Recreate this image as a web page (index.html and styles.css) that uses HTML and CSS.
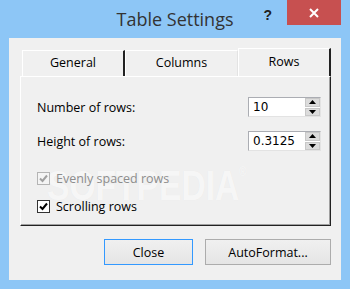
FILE: index.html
```html
<!DOCTYPE html>
<html lang="en">
<head>
  <meta charset="UTF-8">
  <title>Table Settings</title>
  <link rel="stylesheet" href="styles.css">
</head>
<body>
  <div class="window">
    <div class="titlebar">
      <span></span>
      <h1 class="title">Table Settings</h1>
      <div class="controls">
        <span class="help">?</span>
        <span class="close">
          <svg width="10" height="10" viewBox="0 0 10 10"><path d="M1 1L9 9M9 1L1 9" stroke="#fff" stroke-width="2"/></svg>
        </span>
      </div>
    </div>

    <div class="client">
      <div class="tabs">
        <div class="tab tab-first">General</div>
        <div class="tab tab-mid">Columns</div>
        <div class="tab active">Rows</div>
      </div>

      <div class="panel">
        <div class="watermark">SOFTPEDIA<sup>®</sup></div>

        <div class="field">
          <span>Number of rows:</span>
          <div class="spin">
            <span class="spin-value">10</span>
            <span class="spin-btns">
              <span class="spin-btn"><svg width="7" height="4" viewBox="0 0 7 4"><path d="M3.5 0L7 4H0Z" fill="#000"/></svg></span>
              <span class="spin-btn"><svg width="7" height="4" viewBox="0 0 7 4"><path d="M0 0H7L3.5 4Z" fill="#000"/></svg></span>
            </span>
          </div>
        </div>
        <div class="field">
          <span>Height of rows:</span>
          <div class="spin">
            <span class="spin-value">0.3125</span>
            <span class="spin-btns">
              <span class="spin-btn"><svg width="7" height="4" viewBox="0 0 7 4"><path d="M3.5 0L7 4H0Z" fill="#000"/></svg></span>
              <span class="spin-btn"><svg width="7" height="4" viewBox="0 0 7 4"><path d="M0 0H7L3.5 4Z" fill="#000"/></svg></span>
            </span>
          </div>
        </div>

        <div class="check disabled">
          <span class="box"><svg width="11" height="11" viewBox="0 0 11 11"><path d="M2 5.5L4.5 8L9 2.5" fill="none" stroke="#a0a0a0" stroke-width="2"/></svg></span>
          <span>Evenly spaced rows</span>
        </div>
        <div class="check">
          <span class="box"><svg width="11" height="11" viewBox="0 0 11 11"><path d="M2 5.5L4.5 8L9 2.5" fill="none" stroke="#000" stroke-width="2"/></svg></span>
          <span>Scrolling rows</span>
        </div>
      </div>

      <div class="actions">
        <button class="btn btn-default">Close</button>
        <button class="btn btn-wide">AutoFormat...</button>
      </div>
    </div>
  </div>
</body>
</html>
```

FILE: styles.css
```css
body { margin: 0; background: #8dc6f6; font-family: "Open Sans", "Noto Sans", sans-serif; }

.window { width: 350px; height: 289px; background: #8dc6f6; }

.titlebar {
  height: 38px;
  padding: 0 9px;
  display: grid;
  grid-template-columns: 1fr auto 1fr;
}
.title {
  margin: 0;
  font-weight: normal;
  font-size: 18px;
  color: #333;
  line-height: 39px;
}
.controls { display: flex; justify-content: flex-end; align-items: flex-start; }
.help {
  font-family: "Liberation Sans", sans-serif;
  font-weight: bold;
  font-size: 14px;
  color: #222;
  margin: 7px 15px 0 0;
}
.close {
  width: 54px;
  height: 25px;
  background: #c75050;
  display: flex;
  align-items: center;
  justify-content: center;
}

.client {
  height: 242px;
  box-sizing: border-box;
  background: #f0f0f0;
  margin: 0 9px;
  padding: 10px 10px 15px 11px;
  font-size: 12.5px;
  color: #000;
}

/* tabs */
.tabs { height: 28px; display: flex; align-items: flex-end; }
.tab {
  height: 26px;
  box-sizing: border-box;
  border-top: 1px solid #fff;
  border-left: 1px solid #fff;
  border-right: 1px solid #e3e3e3;
  display: flex;
  align-items: center;
  justify-content: center;
  padding-bottom: 2px;
}
.tab-first { margin-left: 2px; width: 103px; border-right: 2px solid #222; }
.tab-mid { width: 113px; }
.tab.active {
  width: 93px;
  height: 29px;
  margin-bottom: -1px;
  border-right: 2px solid #222;
  background: #f0f0f0;
  position: relative;
  padding-bottom: 4px;
}

.panel {
  height: 150px;
  box-sizing: border-box;
  border-top: 1px solid #fff;
  border-left: 1px solid #fff;
  border-right: 1px solid #222;
  border-bottom: 1px solid #222;
  box-shadow: inset -1px -1px #a0a0a0;
  padding: 20px 9px 0 16px;
  position: relative;
}

.field {
  height: 20px;
  display: flex;
  align-items: center;
  justify-content: space-between;
  margin-bottom: 14px;
  position: relative;
}
.spin {
  width: 73px;
  height: 20px;
  box-sizing: border-box;
  border: 1px solid #abadb3;
  border-right-color: #e3e3e3;
  border-bottom-color: #e3e3e3;
  background: #fff;
  display: flex;
}
.spin-value {
  flex: 1;
  padding-left: 4px;
  font-family: "DejaVu Sans", sans-serif;
  font-size: 12px;
  line-height: 18px;
}
.spin-btns { width: 15px; display: flex; flex-direction: column; gap: 1px; }
.spin-btn {
  flex: 1;
  background: #dcdcdc;
  border: 1px solid #c8c8c8;
  display: flex;
  align-items: center;
  justify-content: center;
}

.check { height: 20px; display: flex; align-items: center; gap: 6px; margin-top: 17px; position: relative; }
.check + .check { margin-top: 8px; }
.box {
  width: 13px;
  height: 13px;
  box-sizing: border-box;
  border: 1px solid #333;
  background: #fff;
  display: flex;
  align-items: center;
  justify-content: center;
}
.check.disabled { color: #8d8d8d; }
.check.disabled .box { border-color: #b4b4b4; background: #f4f4f4; }

/* faint watermark lying under the controls */
.watermark {
  position: absolute;
  left: 26px;
  top: 74px;
  font-family: "Liberation Sans", sans-serif;
  font-weight: bold;
  font-size: 42px;
  line-height: 42px;
  transform: scaleX(0.8);
  transform-origin: left top;
  color: rgba(255, 255, 255, 0.7);
  text-shadow: 0 0 1px rgba(0, 0, 0, 0.05);
  pointer-events: none;
}
.watermark sup { font-size: 12px; font-weight: normal; vertical-align: 24px; }

.actions { display: flex; justify-content: flex-end; gap: 12px; margin-top: 13px; }
.btn {
  height: 26px;
  font-family: inherit;
  font-size: 12.5px;
  color: #000;
  background: linear-gradient(#f0f0f0, #e5e5e5);
  border: 1px solid #acacac;
  padding: 0;
}
.btn-default { width: 89px; border-color: #3399ff; }
.btn-wide { width: 126px; }
```
